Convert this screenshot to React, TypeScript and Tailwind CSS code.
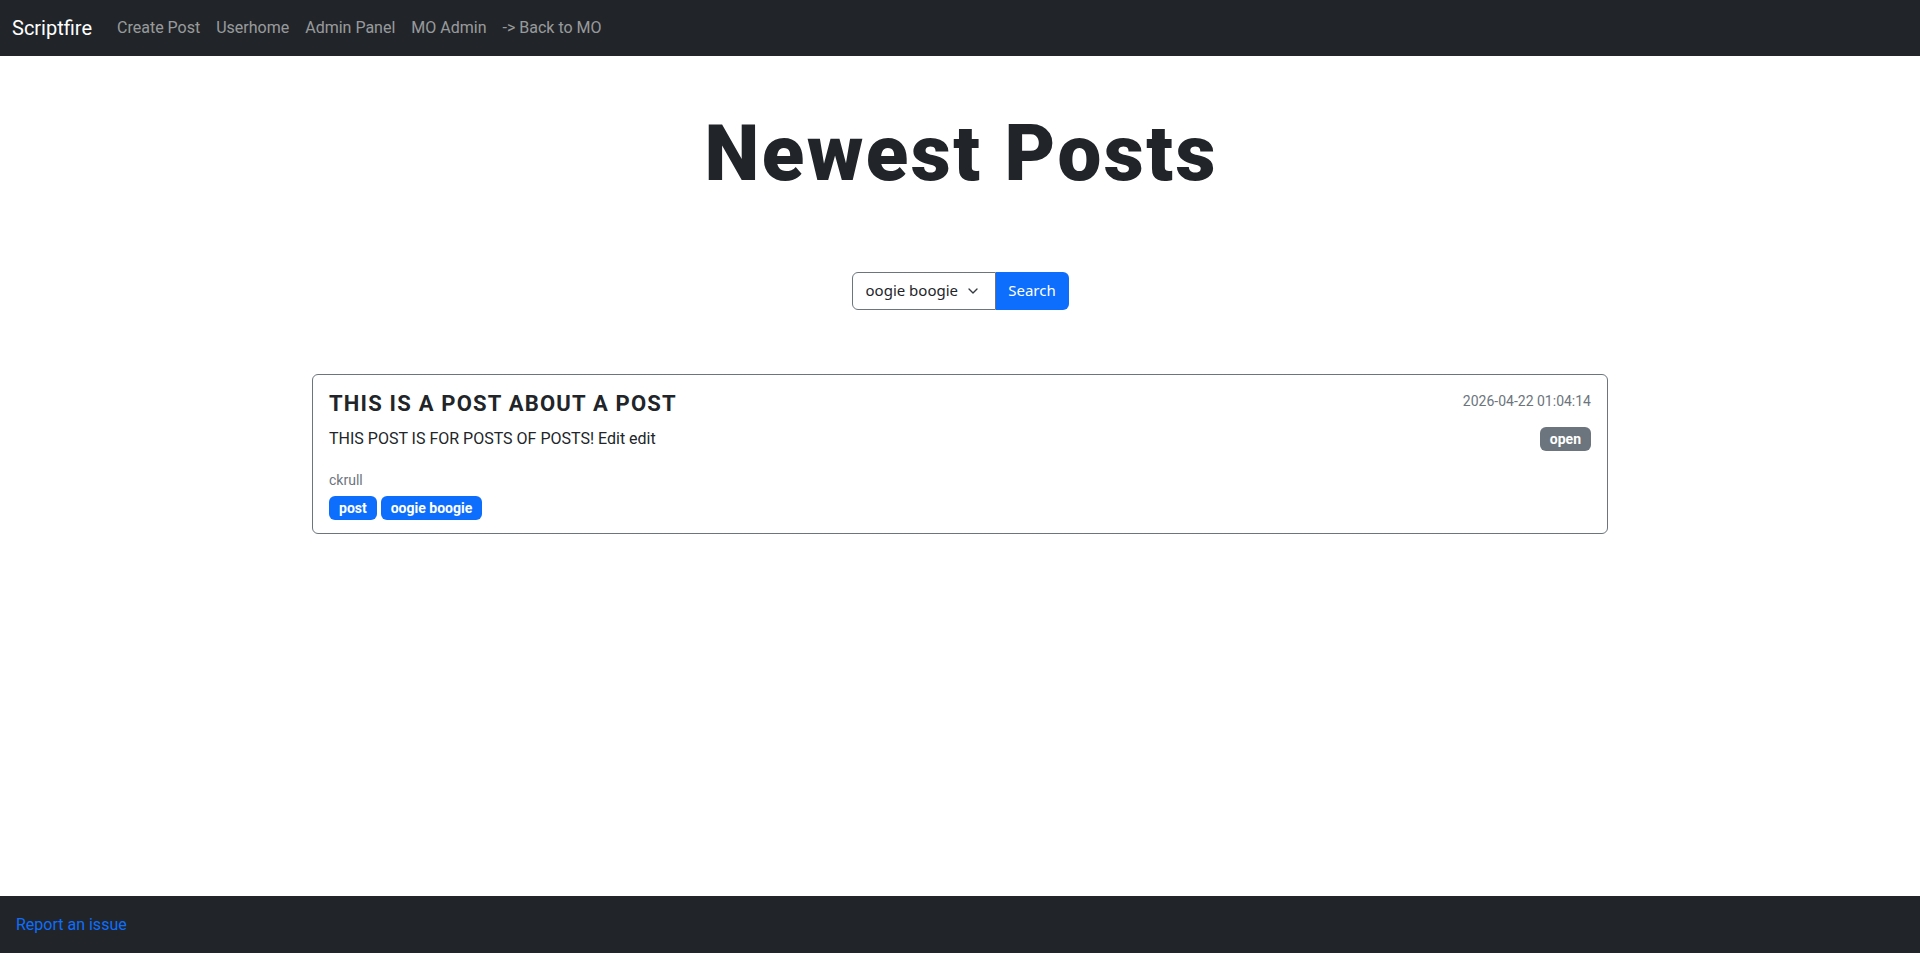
import { ChevronDown } from "lucide-react";

const navLinks = ["Create Post", "Userhome", "Admin Panel", "MO Admin", "-> Back to MO"];

function Navbar() {
  return (
    <nav className="flex h-14 items-center bg-[#212529] px-3">
      <a className="mr-[17px] text-[20px] text-white">Scriptfire</a>
      <div className="flex items-center">
        {navLinks.map((link) => (
          <a key={link} className="px-2 text-base text-[rgba(255,255,255,0.55)]">
            {link}
          </a>
        ))}
      </div>
    </nav>
  );
}

function SearchBar() {
  return (
    <div className="flex justify-center font-['Noto_Sans',sans-serif] text-[15px]">
      <div className="flex h-[38px] w-[144px] items-center justify-between rounded-l-md border border-[#6c757d] bg-white pl-[13px] pr-[14px] text-[#212529]">
        <span>oogie boogie</span>
        <ChevronDown className="h-4 w-4 text-[#343a40]" strokeWidth={2} />
      </div>
      <button className="h-[38px] w-[73px] rounded-r-md bg-[#0d6efd] text-white">Search</button>
    </div>
  );
}

function PostCard() {
  return (
    <div className="rounded-md border border-[#6c757d] px-4 pb-[13px] pt-4">
      <div className="mb-[10px] flex items-start justify-between">
        <h5 className="text-[22px] font-bold uppercase leading-[1.2] tracking-[1.2px] text-[#212529]">
          This is a post about a post
        </h5>
        <span className="text-sm leading-[1.5] text-[#6c757d]">2026-04-22 01:04:14</span>
      </div>
      <div className="flex items-center justify-between">
        <p className="text-base leading-6 text-[#212529]">THIS POST IS FOR POSTS OF POSTS! Edit edit</p>
        <span className="flex h-6 items-center rounded-md bg-[#6c757d] px-2.5 text-sm font-bold text-white">open</span>
      </div>
      <div className="mt-[19px] text-sm leading-[21px] text-[#6c757d]">ckrull</div>
      <div className="mt-[5px] flex gap-1">
        {["post", "oogie boogie"].map((tag) => (
          <span key={tag} className="flex h-6 items-center rounded-md bg-[#0d6efd] px-2.5 text-sm font-bold text-white">
            {tag}
          </span>
        ))}
      </div>
    </div>
  );
}

export default function App() {
  return (
    <div className="flex min-h-screen flex-col bg-white font-['Roboto',sans-serif] text-[#212529]">
      <Navbar />
      <main className="flex-1">
        <div className="mx-auto max-w-[1320px] px-3">
          <h1 className="mt-[51px] pl-[2.5px] text-center text-[78px] font-black leading-[1.2] tracking-[2.5px] text-[#212529]">
            Newest Posts
          </h1>
          <div className="mt-[71px]">
            <SearchBar />
          </div>
          <div className="mt-16">
            <PostCard />
          </div>
        </div>
      </main>
      <footer className="flex h-[57px] items-center bg-[#212529] px-4">
        <a className="text-base text-[#0d6efd]">Report an issue</a>
      </footer>
    </div>
  );
}
